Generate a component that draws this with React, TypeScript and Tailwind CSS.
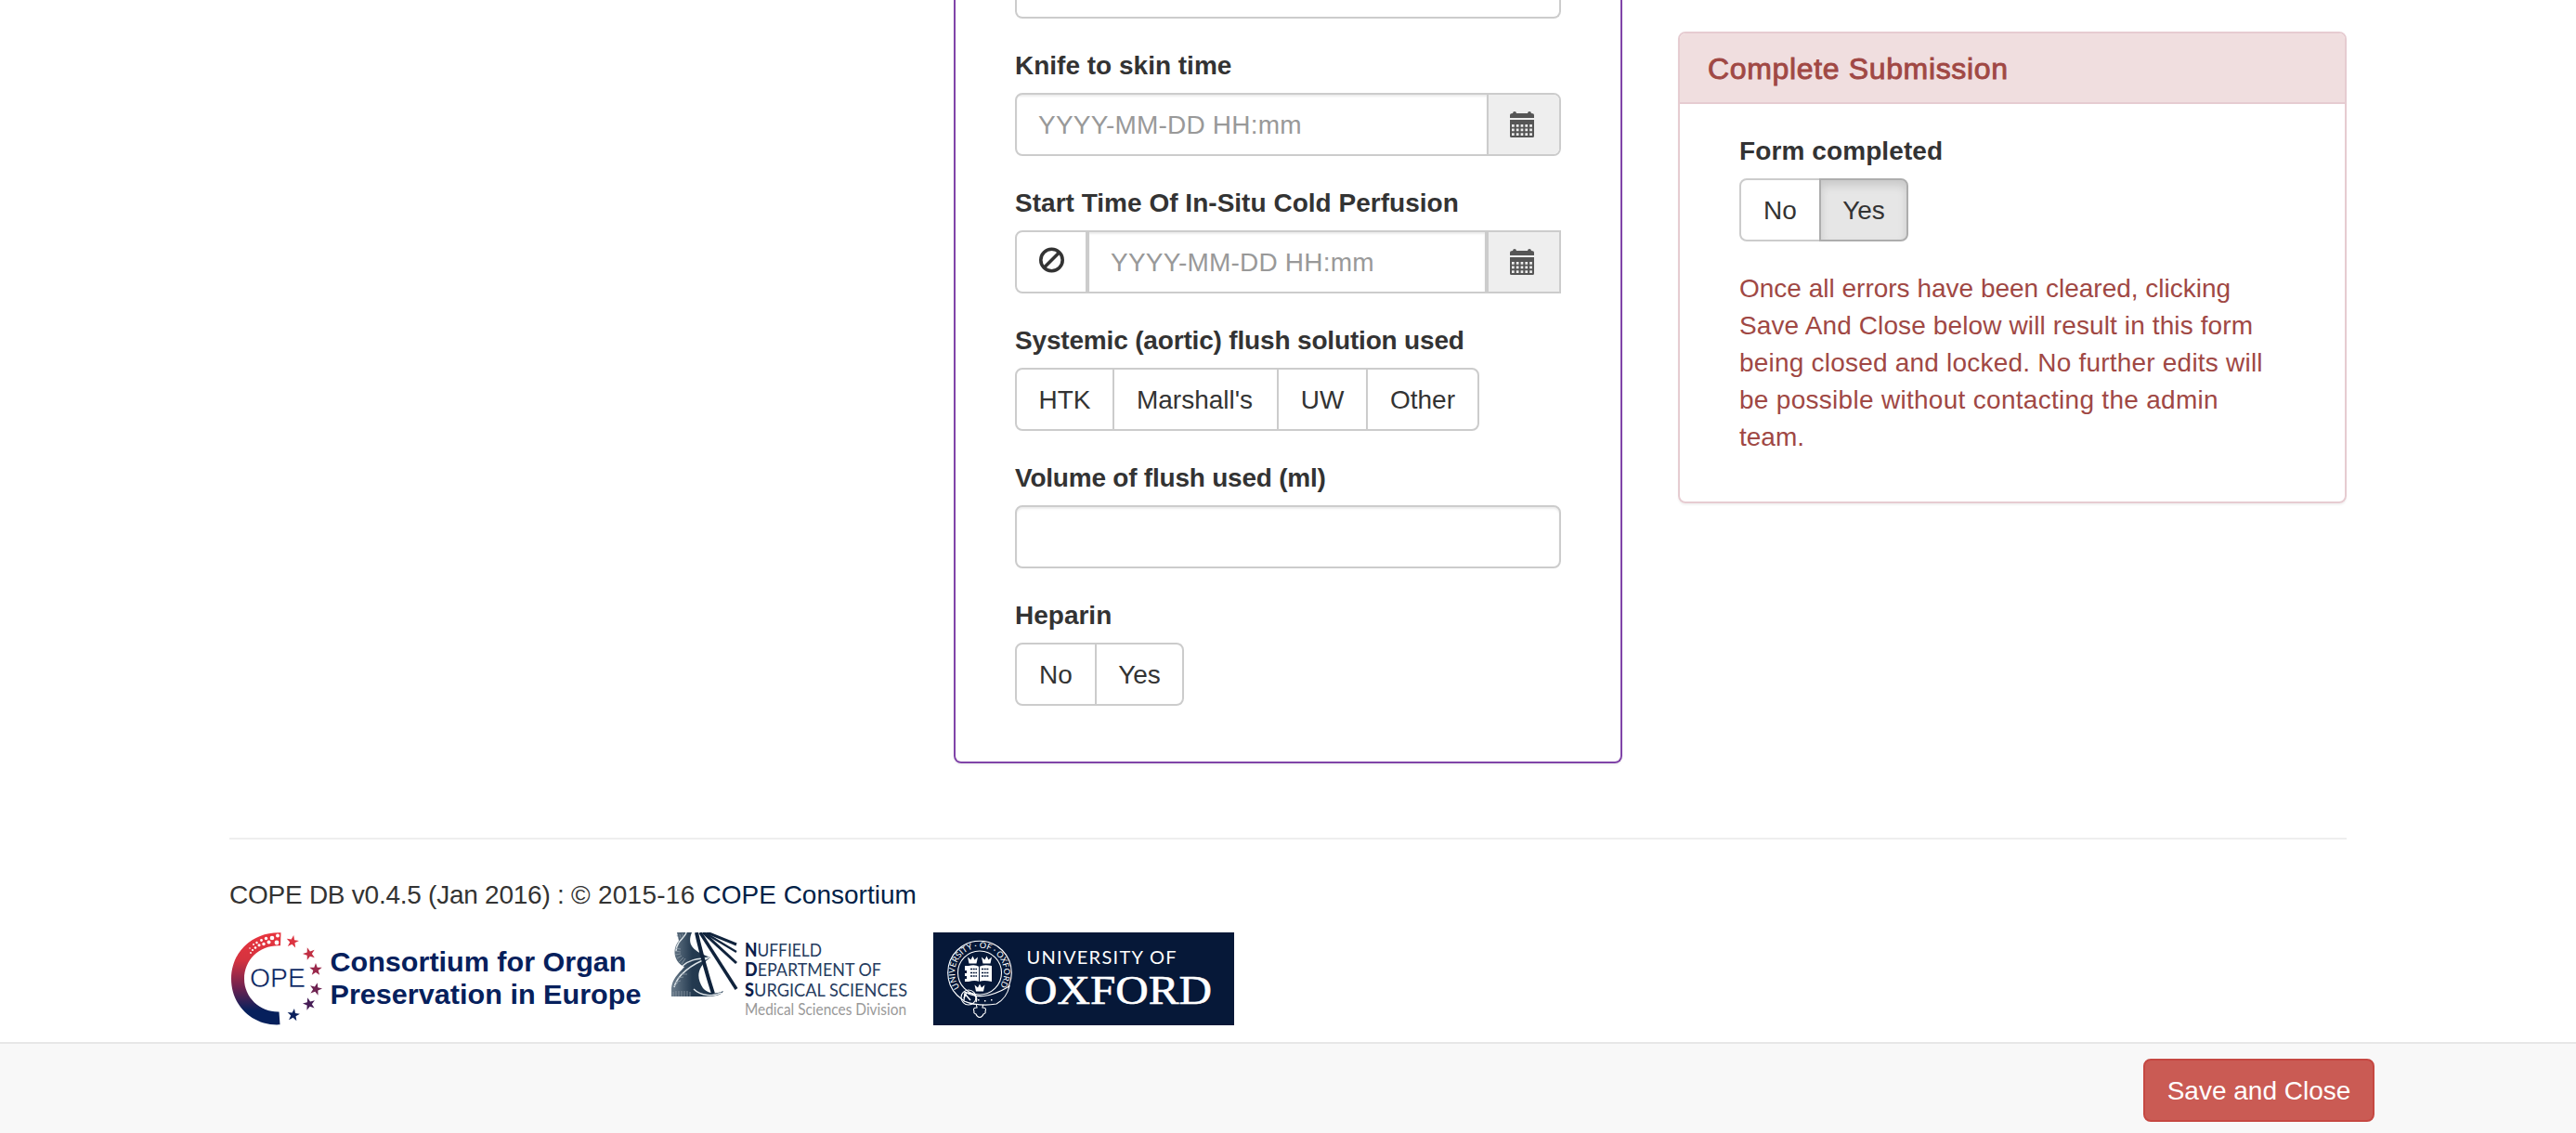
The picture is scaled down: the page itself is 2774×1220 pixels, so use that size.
import React, { type ReactNode } from "react";

function Calendar() {
  return (
    <svg width="26" height="28" viewBox="0 0 26 28" className="block" fill="#555">
      <path d="M0 7V4Q0 2.500 1.500 2.300L3 2Q3.200 0 5 0T7 2H19Q19.200 0 21 0T23 2L24.500 2.300Q26 2.500 26 4V7Z" />
      <path fillRule="evenodd" d="M0 9H26V26.500Q26 28 24.500 28H1.500Q0 28 0 26.500ZM2 14V16.700H4.700V14ZM6.800 14V16.700H9.500V14ZM11.600 14V16.700H14.300V14ZM16.400 14V16.700H19.100V14ZM21.200 14V16.700H23.900V14ZM2 18.600V21.300H4.700V18.600ZM6.800 18.600V21.300H9.500V18.600ZM11.600 18.600V21.300H14.300V18.600ZM16.400 18.600V21.300H19.100V18.600ZM21.200 18.600V21.300H23.900V18.600ZM2 23.200V25.900H4.700V23.200ZM6.800 23.200V25.900H9.500V23.200ZM11.600 23.200V25.900H14.300V23.200ZM16.400 23.200V25.900H19.100V23.200ZM21.200 23.200V25.900H23.900V23.200Z" />
    </svg>
  );
}

function Field({ label, spacing, children }: { label: string; spacing: string; children: ReactNode }) {
  return (
    <div className="mb-[30px]">
      <label className={"mb-[10px] block h-10 pt-px font-bold whitespace-nowrap " + spacing}>{label}</label>
      {children}
    </div>
  );
}

const btn = "flex h-[68px] items-center justify-center border-2 pt-0.5 ";

function Footer() {
  return (
    <footer className="mt-20 border-t-2 border-[#eee] pt-10">
      <p className="h-10">
        <span className="tracking-[-0.25px]">COPE DB v0.4.5 (Jan 2016) : </span>
        <span className="tracking-[0.25px]">© 2015-16 </span>
        <a className="text-[#002147]">COPE Consortium</a>
      </p>
      <div className="mt-[20px] flex h-[100px] items-start">
        <CopeLogo />
        <NdsLogo />
        <OxfordLogo />
      </div>
    </footer>
  );
}

const star = "M0-7L1.700-2.200H6.700L2.700.9L4.200 5.800L0 2.900L-4.200 5.800L-2.700.9L-6.700-2.200H-1.700Z";
const stars = [
  { x: 68, y: 10, r: 10, c: "#dc3340" },
  { x: 86, y: 23, r: -18, c: "#c12f43" },
  { x: 93, y: 40, r: 0, c: "#99274a" },
  { x: 93, y: 61, r: 15, c: "#6d2250" },
  { x: 86, y: 77, r: -15, c: "#461d56" },
  { x: 69, y: 89, r: 8, c: "#0a205c" },
];
const bubbles = [
  [52, 3.5, 2], [51, 11, 2.4], [46, 6, 2.3], [42.5, 10.5, 2], [39.5, 6.5, 1.7], [37, 12.5, 1.7],
  [34.5, 8.5, 1.4], [32, 13.8, 1.5], [29.5, 11, 1.2], [28, 16.5, 1.3], [26, 13, 1], [25, 19, 1.1], [23, 22, 0.9], [22, 17, 0.8],
];

function CopeLogo() {
  return (
    <svg width="450" height="100" viewBox="0 0 450 100" className="shrink-0" fontFamily="Liberation Sans, sans-serif">
      <defs>
        <linearGradient id="ring" x1="0" y1="0" x2="0" y2="1">
          <stop offset="0" stopColor="#e8343e" />
          <stop offset=".3" stopColor="#d5333f" />
          <stop offset=".6" stopColor="#6d2250" />
          <stop offset=".85" stopColor="#06205c" />
        </linearGradient>
      </defs>
      <path fill="url(#ring)" d="M55.500.2C25-1 2 21 2 50C2 79 25 101 54.500 99.300L53.500 85.500C33 86 16 70 16 50C16 29 33 13 55 14.200Z" />
      {bubbles.map(([x, y, r]) => <circle key={x} cx={x} cy={y} r={r} fill="#fff" />)}
      {stars.map((s) => <path key={s.y} d={star} fill={s.c} transform={`translate(${s.x} ${s.y}) rotate(${s.r})`} />)}
      <text x="22" y="59.300" fontSize="29" textLength="60" lengthAdjust="spacingAndGlyphs" fill="#06205c" stroke="#fff" strokeWidth=".5">OPE</text>
      <g fill="#06205c" fontWeight="bold" fontSize="30">
        <text x="108.500" y="41.700" textLength="319" lengthAdjust="spacingAndGlyphs">Consortium for Organ</text>
        <text x="108.500" y="77" textLength="335" lengthAdjust="spacingAndGlyphs">Preservation in Europe</text>
      </g>
    </svg>
  );
}

function NdsLogo() {
  return (
    <svg width="280" height="100" viewBox="0 0 280 100" className="ml-[26px] shrink-0" fontFamily="Lato, sans-serif">
      <defs>
        <linearGradient id="helix" x1="0" y1="0" x2="1" y2="0">
          <stop offset="0" stopColor="#6b7c8b" />
          <stop offset=".4" stopColor="#243a50" />
          <stop offset="1" stopColor="#1a3048" />
        </linearGradient>
      </defs>
      <path fill="url(#helix)" d="M6 0H22C17 12 22 19 37 25L42 27C28 37 26 48 34 60C39 66 48 67 56 63C54 68 45 69 38 69H0V60C1 50 7 45 14 37C3 32 0 19 8 9Z" />
      <path stroke="#dde4e8" strokeWidth="1.500" fill="none" d="M16 0C15 6 5 9 5 20M12 36C22 27 33 29 41 27M3 59C6 46 22 34 39 28M24 61C32 69 45 69 54 65" />
      <path stroke="#8d9ba6" strokeWidth=".8" fill="none" d="M6 3L8 6M9 2L10 6M12 1L12 5M4 17L10 18M4 20L10 21M4 24L10 23M6 28L11 25M8 32L13 27M11 34L15 28M3 58L7 54M4 54L10 52M7 49L13 48M11 45L17 45M2 64V69M5 63V69M8 63V69M11 63V69M14 63V69M17 63V69M20 64V69" />
      <path stroke="#10233c" strokeWidth="4" fill="none" d="M27 0Q33 28 45 66" />
      <g stroke="#10233c" fill="none">
        <path strokeWidth="3.500" d="M31 0L70 61" />
        <path strokeWidth="3" d="M34 0L70 33" />
        <path strokeWidth="2.300" d="M35 0L70 21" />
        <path strokeWidth="3" d="M38 0L70 13" />
      </g>
      <g fill="#263c60" fontSize="20">
        <text x="79" y="25.700" textLength="83" lengthAdjust="spacingAndGlyphs"><tspan fontWeight="900" fill="#0b1c4a">N</tspan>UFFIELD</text>
        <text x="79" y="47" textLength="147" lengthAdjust="spacingAndGlyphs"><tspan fontWeight="900" fill="#0b1c4a">D</tspan>EPARTMENT OF</text>
        <text x="79" y="68.700" textLength="175" lengthAdjust="spacingAndGlyphs"><tspan fontWeight="900" fill="#0b1c4a">S</tspan>URGICAL SCIENCES</text>
      </g>
      <text x="79" y="88.700" fontSize="16.500" textLength="174" lengthAdjust="spacingAndGlyphs" fill="#999">Medical Sciences Division</text>
    </svg>
  );
}

const crown = "M0 1L3.500 4L5.500 0L7.500 4L11 1L9.500 8H1.500Z";

function OxfordLogo() {
  return (
    <svg width="324" height="100" viewBox="0 0 324 100" className="ml-[2px] shrink-0">
      <rect width="324" height="100" fill="#061838" />
      <path id="motto" d="M28.500 59.200A26.500 26.500 0 1 1 69 61.500" fill="none" />
      <g fill="none" stroke="#fff" strokeWidth="1.100">
        <circle cx="50" cy="43.500" r="34.300" />
        <circle cx="50" cy="43.500" r="23.500" />
        <path fill="#061838" d="M46 76L47 81Q42 81 44 85Q43 87 46 88Q47 91 50 91.500Q53 91 54 88Q57 87 56 85Q58 81 53 81L54 76Z" />
        <path fill="#061838" d="M34 64C46 71 60 71 82 58Q79 71 68 77C57 79 44 78 33 74Z" />
        <circle cx="38" cy="70" r="8" />
        <path d="M34 66L40 73M36 64L33 71M37 65C45 66 48 69 46 75" strokeWidth="1.500" />
      </g>
      <path fill="#fff" d="M48 72h1.500v1.500H48ZM55 73h1.500v1.500H55ZM62 72h1.500v1.500H62Z" />
      <path fill="#fff" d={crown} transform="translate(37 25.500)" />
      <path fill="#fff" d={crown} transform="translate(52 25.500)" />
      <path fill="#fff" d={crown} transform="translate(44.500 55.500)" />
      <path fill="#fff" d="M34 36H38Q45 34 49.500 37Q54 34 63 36V53Q54 51 49.500 53Q45 51 38 53H34V50H36V47H34V44H36V41H34Z" />
      <path stroke="#061838" strokeWidth="1.300" strokeDasharray="2 .7" d="M40 39.500H47M40 43.500H47M40 47H47M52 39.500H60M52 43.500H60M52 47H60" />
      <path stroke="#061838" strokeWidth="1" d="M49.500 37V53" />
      <text fill="#fff" fontSize="9" fontFamily="Lato, sans-serif">
        <textPath href="#motto" textLength="115">UNIVERSITY · OF · OXFORD</textPath>
      </text>
      <text x="100.500" y="33.700" fill="#fff" fontSize="20" fontFamily="Lato, sans-serif" textLength="161">UNIVERSITY OF</text>
      <text x="98" y="77" fill="#fff" stroke="#fff" strokeWidth=".6" fontSize="44" fontFamily="Liberation Serif, serif" textLength="202" lengthAdjust="spacingAndGlyphs">OXFORD</text>
    </svg>
  );
}

export default function App() {
  return (
    <div className="flex h-[1220px] w-[2774px] flex-col overflow-hidden bg-white font-['Liberation_Sans',Arial,sans-serif] text-[28px] leading-[40px] text-[#333]">
      <main className="ml-[247px] h-[1122px] w-[2280px]">
        <div className="ml-[780px] flex items-start gap-[60px]">
          <section className="h-[822px] w-[720px] rounded-b-[8px] border-2 border-t-0 border-[#8044a8] px-16 shadow-[0_2px_2px_rgba(0,0,0,0.05)]">
            <div className="mb-[30px] h-5 rounded-b-[8px] border-2 border-t-0 border-[#ccc]" />
            <Field label="Knife to skin time" spacing="tracking-normal">
              <div className="flex h-[68px] overflow-hidden rounded-[8px] border-2 border-[#ccc]">
                <div className="flex-1 px-[23px] pt-[13px] tracking-[0.2px] text-[#999] shadow-[inset_0_2px_2px_rgba(0,0,0,0.075)]">YYYY-MM-DD HH:mm</div>
                <div className="flex w-[78px] items-center justify-center border-l-2 border-[#ccc] bg-[#eee] pr-1"><Calendar /></div>
              </div>
            </Field>
            <Field label="Start Time Of In-Situ Cold Perfusion" spacing="tracking-[0.02px]">
              <div className="flex h-[68px] overflow-hidden rounded-l-[8px] border-2 border-[#ccc]">
                <div className="flex w-[74px] items-center justify-center pb-1">
                  <svg width="28" height="28" viewBox="0 0 28 28" fill="none" stroke="#333" strokeWidth="3.600"><circle cx="14.500" cy="14" r="11.700" /><path d="M6.500 22L22.500 6" /></svg>
                </div>
                <div className="flex-1 border-x-4 border-[#ccc] px-[23px] pt-[13px] tracking-[0.2px] text-[#999] shadow-[inset_0_2px_2px_rgba(0,0,0,0.075)]">YYYY-MM-DD HH:mm</div>
                <div className="flex w-[76px] items-center justify-center bg-[#eee] pr-1"><Calendar /></div>
              </div>
            </Field>
            <Field label="Systemic (aortic) flush solution used" spacing="tracking-[-0.17px]">
              <div className="flex">
                <div className={btn + "w-[107px] rounded-l-[8px] border-[#ccc]"}>HTK</div>
                <div className={btn + "-ml-0.5 w-[179px] border-[#ccc] pr-0.5"}>Marshall's</div>
                <div className={btn + "-ml-0.5 w-[98px] border-[#ccc]"}>UW</div>
                <div className={btn + "-ml-0.5 w-[122px] rounded-r-[8px] border-[#ccc]"}>Other</div>
              </div>
            </Field>
            <Field label="Volume of flush used (ml)" spacing="tracking-[-0.22px]">
              <div className="h-[68px] rounded-[8px] border-2 border-[#ccc] shadow-[inset_0_2px_2px_rgba(0,0,0,0.075)]" />
            </Field>
            <Field label="Heparin" spacing="tracking-normal">
              <div className="flex">
                <div className={btn + "w-[88px] rounded-l-[8px] border-[#ccc]"}>No</div>
                <div className={btn + "-ml-0.5 w-[96px] rounded-r-[8px] border-[#ccc]"}>Yes</div>
              </div>
            </Field>
          </section>

          <section className="mt-[34px] h-[508px] w-[720px] overflow-hidden rounded-[8px] border-2 border-[#e6ccd1] shadow-[0_2px_2px_rgba(0,0,0,0.05)]">
            <h3 className="h-[76px] border-b-2 border-[#e6ccd1] bg-[#f0dedf] px-[30px] pt-[21px] text-[32px] leading-[34px] tracking-[0.65px] text-[#a04844] [-webkit-text-stroke:0.9px_#a04844]">Complete Submission</h3>
            <div className="px-16 pt-[30px]">
              <Field label="Form completed" spacing="tracking-[0.1px]">
                <div className="flex">
                  <div className={btn + "w-[88px] rounded-l-[8px] border-[#ccc]"}>No</div>
                  <div className={btn + "-ml-0.5 w-[96px] rounded-r-[8px] border-[#adadad] bg-[#e6e6e6] shadow-[inset_0_6px_10px_rgba(0,0,0,0.125)]"}>Yes</div>
                </div>
              </Field>
              <p className="pt-px whitespace-nowrap text-[#a04844]">
                Once all errors have been cleared, clicking<br />
                <span className="tracking-[0.12px]">Save And Close below will result in this form</span><br />
                <span className="tracking-[0.21px]">being closed and locked. No further edits will</span><br />
                <span className="tracking-[0.29px]">be possible without contacting the admin</span><br />
                team.
              </p>
            </div>
          </section>
        </div>
        <Footer />
      </main>
      <nav className="h-[98px] border-t-2 border-[#e7e7e7] bg-[#f8f8f8] pt-4">
        <button className="ml-[2308px] block h-[68px] w-[249px] rounded-[8px] border-2 border-[#c64842] bg-[#ca5b54] pt-px text-white">Save and Close</button>
      </nav>
    </div>
  );
}
